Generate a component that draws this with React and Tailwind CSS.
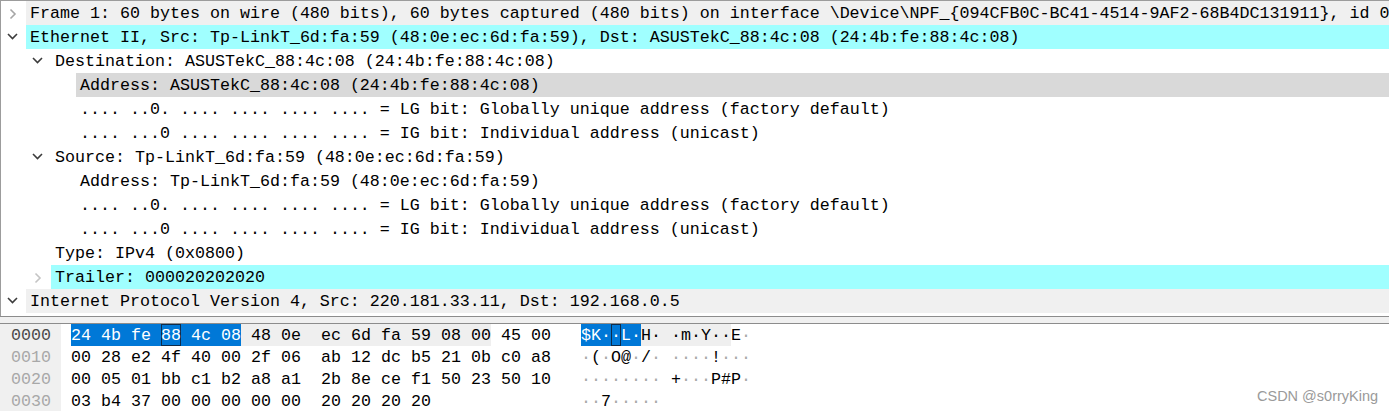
import React from "react";

const MONO = { fontFamily: '"Liberation Mono", "DejaVu Sans Mono", monospace' };
const NB = "\u00a0";

function Chevron({ dir, color }) {
  if (!dir) return <div className="w-[25px] shrink-0" />;
  return (
    <div className="w-[25px] shrink-0 h-full">
      <svg width="25" height="24" viewBox="0 0 25 24">
        {dir === "right" ? (
          <polyline points="9.5,8.5 14,13 9.5,17.5" fill="none" stroke={color} strokeWidth="1.6" />
        ) : (
          <polyline points="7,9 11.5,13.5 16,9" fill="none" stroke={color} strokeWidth="1.6" />
        )}
      </svg>
    </div>
  );
}

const tree = [
  { lvl: 0, dir: "right", ac: "#a6a6a6", bg: "bg-[#f0f0f0]", text: "Frame 1: 60 bytes on wire (480 bits), 60 bytes captured (480 bits) on interface \\Device\\NPF_{094CFB0C-BC41-4514-9AF2-68B4DC131911}, id 0" },
  { lvl: 0, dir: "down", ac: "#3c3c3c", bg: "bg-[#a0ffff]", text: "Ethernet II, Src: Tp-LinkT_6d:fa:59 (48:0e:ec:6d:fa:59), Dst: ASUSTekC_88:4c:08 (24:4b:fe:88:4c:08)" },
  { lvl: 1, dir: "down", ac: "#3c3c3c", bg: "", text: "Destination: ASUSTekC_88:4c:08 (24:4b:fe:88:4c:08)" },
  { lvl: 2, bg: "bg-[#d9d9d9]", text: "Address: ASUSTekC_88:4c:08 (24:4b:fe:88:4c:08)" },
  { lvl: 2, bg: "", text: ".... ..0. .... .... .... .... = LG bit: Globally unique address (factory default)" },
  { lvl: 2, bg: "", text: ".... ...0 .... .... .... .... = IG bit: Individual address (unicast)" },
  { lvl: 1, dir: "down", ac: "#3c3c3c", bg: "", text: "Source: Tp-LinkT_6d:fa:59 (48:0e:ec:6d:fa:59)" },
  { lvl: 2, bg: "", text: "Address: Tp-LinkT_6d:fa:59 (48:0e:ec:6d:fa:59)" },
  { lvl: 2, bg: "", text: ".... ..0. .... .... .... .... = LG bit: Globally unique address (factory default)" },
  { lvl: 2, bg: "", text: ".... ...0 .... .... .... .... = IG bit: Individual address (unicast)" },
  { lvl: 1, bg: "", text: "Type: IPv4 (0x0800)" },
  { lvl: 1, dir: "right", ac: "#c4c4c4", bg: "bg-[#a0ffff]", text: "Trailer: 000020202020" },
  { lvl: 0, dir: "down", ac: "#3c3c3c", bg: "bg-[#f0f0f0]", text: "Internet Protocol Version 4, Src: 220.181.33.11, Dst: 192.168.0.5" },
];

const indent = ["w-0", "w-[25px]", "w-[50px]"];

const hexRows = [
  { off: "0000", bytes: "24 4b fe 88 4c 08 48 0e ec 6d fa 59 08 00 45 00", ascii: "$K··L·H··m·Y··E·" },
  { off: "0010", bytes: "00 28 e2 4f 40 00 2f 06 ab 12 dc b5 21 0b c0 a8", ascii: "·(·O@·/·····!···" },
  { off: "0020", bytes: "00 05 01 bb c1 b2 a8 a1 2b 8e ce f1 50 23 50 10", ascii: "········+···P#P·" },
  { off: "0030", bytes: "03 b4 37 00 00 00 00 00 20 20 20 20", ascii: "··7·····    " },
];

function stateOf(row, i) {
  if (row !== 0) return "none";
  if (i <= 5) return "sel";
  if (i <= 13) return "gray";
  return "none";
}

const bgFor = { sel: "bg-[#0078d7] text-white", gray: "bg-[#efefef]", none: "" };

function sepState(row, i) {
  const a = stateOf(row, i);
  const b = stateOf(row, i + 1);
  if (a !== "none" && b !== "none") return b;
  return "none";
}

const BOX = "shadow-[inset_0_0_0_1px_#0f2c4a]";

function HexPart({ row, bytes }) {
  const list = bytes.split(" ");
  const out = [];
  list.forEach((b, i) => {
    const st = stateOf(row, i);
    const boxed = row === 0 && i === 3;
    out.push(
      <span key={"b" + i} className={`flex items-center ${bgFor[st]} ${boxed ? BOX : ""}`}>
        {b}
      </span>
    );
    if (i < list.length - 1) {
      const ss = sepState(row, i);
      out.push(
        <span key={"s" + i} className={`flex items-center ${bgFor[ss]}`}>
          {i === 7 ? NB + NB : NB}
        </span>
      );
    }
  });
  return <div className="flex w-[480px] shrink-0">{out}</div>;
}

function AsciiPart({ row, ascii }) {
  const chars = Array.from(ascii);
  const out = [];
  chars.forEach((c, i) => {
    const st = stateOf(row, i);
    const boxed = row === 0 && i === 3;
    const dot = c === "·";
    const col = st === "none" && dot ? "text-[#a8a8a8]" : "";
    out.push(
      <span key={"a" + i} className={`flex items-center ${bgFor[st]} ${col} ${boxed ? BOX : ""}`}>
        {c === " " ? NB : c}
      </span>
    );
    if (i === 7 && chars.length > 8) {
      const ss = sepState(row, i);
      out.push(
        <span key="sep" className={`flex items-center ${bgFor[ss]}`}>
          {NB}
        </span>
      );
    }
  });
  return <div className="flex">{out}</div>;
}

export default function App() {
  return (
    <div className="relative w-[1389px] h-[411px] overflow-hidden bg-white text-[16.667px] text-[#000]" style={MONO}>
      <div className="border-t border-l border-[#9c9c9c] pb-[3px]">
        {tree.map((r, idx) => (
          <div key={idx} className="flex h-[24px] items-stretch">
            <div className={`${indent[r.lvl]} shrink-0`} />
            <Chevron dir={r.dir} color={r.ac} />
            <div className={`flex-1 flex items-center pl-[4px] whitespace-pre overflow-hidden ${r.bg}`}>
              {r.text}
            </div>
          </div>
        ))}
      </div>
      <div className="h-[8px] border-y border-[#8c8c8c] bg-[#f0f0f0]" />
      <div>
        {hexRows.map((r, idx) => (
          <div key={idx} className="flex h-[22px] items-stretch">
            <div
              className={`w-[61px] shrink-0 flex items-center pl-[11px] bg-[#f0f0f0] ${idx === 0 ? "text-[#4a4a4a]" : "text-[#a8a8a8]"}`}
            >
              {r.off}
            </div>
            <div className="w-[10px] shrink-0" />
            <HexPart row={idx} bytes={r.bytes} />
            <div className="w-[30px] shrink-0" />
            <AsciiPart row={idx} ascii={r.ascii} />
          </div>
        ))}
      </div>
      <div
        className="absolute left-[1257px] top-[386px] text-[14.5px] text-[#9a9a9a] whitespace-nowrap"
        style={{ fontFamily: '"Liberation Sans", Arial, sans-serif' }}
      >
        CSDN @s0rryKing
      </div>
    </div>
  );
}
